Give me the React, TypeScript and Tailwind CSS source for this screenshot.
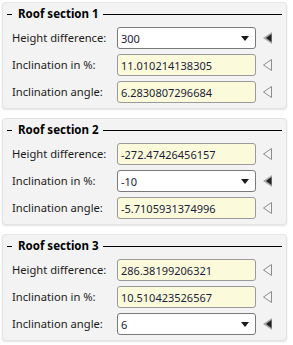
import React from 'react';

type Row = { label: string; value: string; combo?: boolean };
type Section = { title: string; rows: Row[] };

const sections: Section[] = [
  {
    title: 'Roof section 1',
    rows: [
      { label: 'Height difference:', value: '300', combo: true },
      { label: 'Inclination in %:', value: '11.010214138305' },
      { label: 'Inclination angle:', value: '6.2830807296684' },
    ],
  },
  {
    title: 'Roof section 2',
    rows: [
      { label: 'Height difference:', value: '-272.47426456157' },
      { label: 'Inclination in %:', value: '-10', combo: true },
      { label: 'Inclination angle:', value: '-5.7105931374996' },
    ],
  },
  {
    title: 'Roof section 3',
    rows: [
      { label: 'Height difference:', value: '286.38199206321' },
      { label: 'Inclination in %:', value: '10.510423526567' },
      { label: 'Inclination angle:', value: '6', combo: true },
    ],
  },
];

// left pointing marker, filled when the row is the driving input
const Marker: React.FC<{ active?: boolean }> = ({ active }) => (
  <svg width="11" height="14" viewBox="0 0 11 14" className="shrink-0">
    {active ? (
      <>
        <polygon points="10,1 1,7 10,13" fill="#a8a8a8" />
        <polygon points="9.5,3 4,7 9.5,11" fill="#222" />
      </>
    ) : (
      <polygon points="9.5,1.5 1.5,7 9.5,12.5" fill="none" stroke="#8c8c8c" strokeWidth="1" />
    )}
  </svg>
);

const ValueBox: React.FC<{ row: Row }> = ({ row }) => (
  <div
    className={
      row.combo
        ? 'w-[139px] h-[22px] flex items-center justify-between rounded-[3px] border border-[#7a7a7a] bg-white pl-[3px] pr-[6px]'
        : 'w-[139px] h-[22px] flex items-center rounded-[3px] border border-[#9a9a9a] bg-[#fbfbdc] pl-[3px]'
    }
  >
    <span className="text-[11px] text-[#1c1c38] leading-none">{row.value}</span>
    {row.combo && (
      <svg width="8" height="5" viewBox="0 0 8 5">
        <polygon points="0,0 8,0 4,5" fill="#1a1a1a" />
      </svg>
    )}
  </div>
);

const Panel: React.FC<{ section: Section }> = ({ section }) => (
  <div className="w-[285px] h-[107px] rounded-[4px] bg-[#f3f3f3] border border-[#e4e4e4] shadow-[0_1px_2px_rgba(0,0,0,0.12)] pt-[3px]">
    <div className="h-[16px] flex items-center pl-[4px] pr-[4px]">
      <div className="w-[5px] h-px bg-black" />
      <span className="ml-[6px] mr-[4px] text-[11.5px] font-bold text-black leading-none">{section.title}</span>
      <div className="flex-1 h-px bg-black" />
    </div>
    <div className="mt-[5px] flex flex-col gap-[5px] pl-[9px]">
      {section.rows.map((row) => (
        <div key={row.label} className="h-[22px] flex items-center">
          <span className="w-[105px] text-[11.2px] text-[#1a1a1a] leading-none">{row.label}</span>
          <ValueBox row={row} />
          <div className="ml-[6px]">
            <Marker active={row.combo} />
          </div>
        </div>
      ))}
    </div>
  </div>
);

const App: React.FC = () => {
  return (
    <div
      className="w-[293px] h-[345px] bg-white pt-[2px] pl-[2px] flex flex-col gap-[9px]"
      style={{ fontFamily: '"Noto Sans", "Open Sans", sans-serif' }}
    >
      {sections.map((s) => (
        <Panel key={s.title} section={s} />
      ))}
    </div>
  );
};

export default App;
